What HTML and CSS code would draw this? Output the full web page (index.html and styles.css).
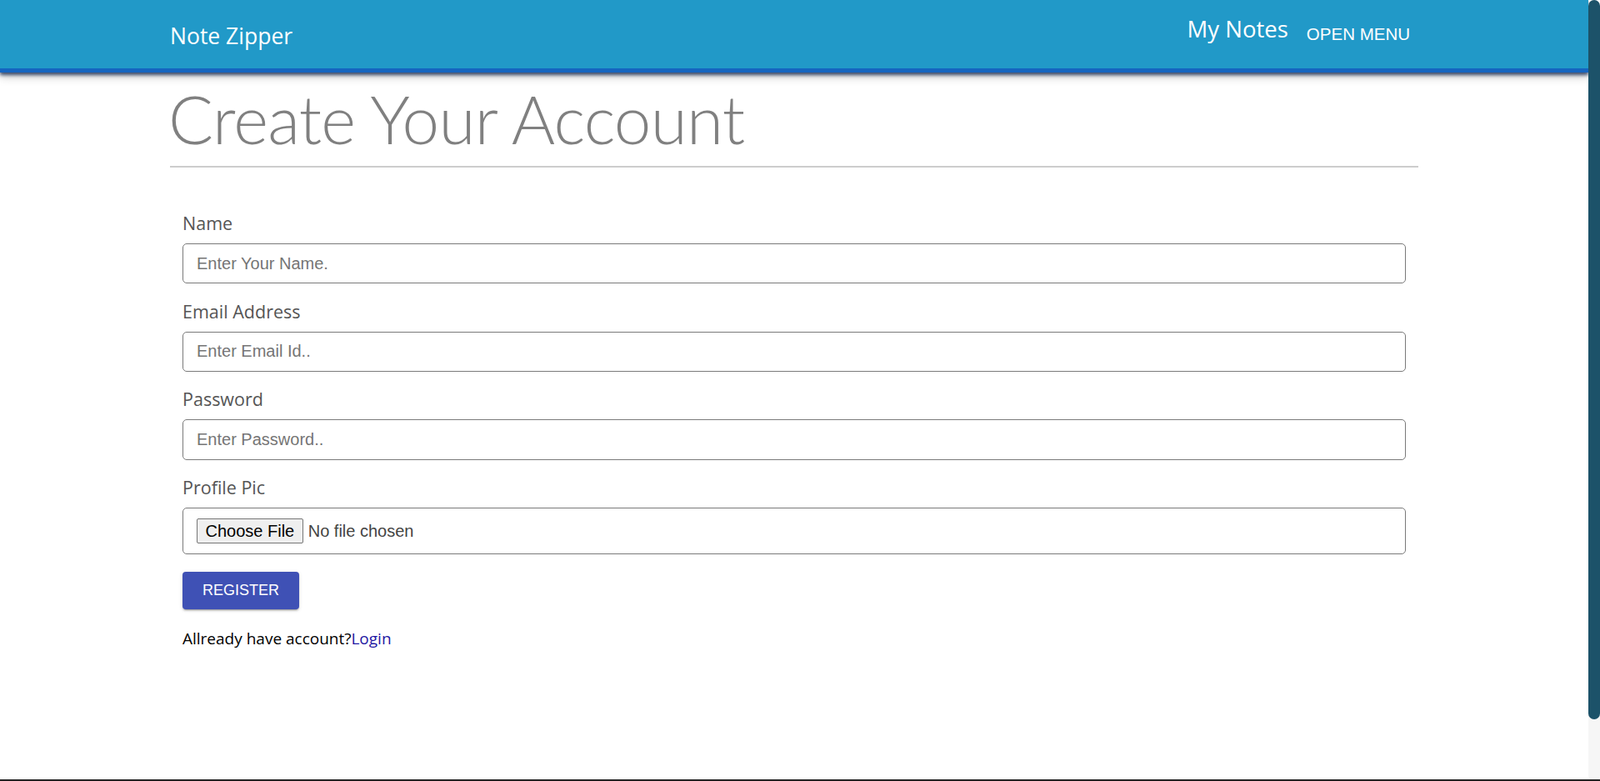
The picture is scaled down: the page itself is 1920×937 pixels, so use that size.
FILE: index.html
```html
<!DOCTYPE html>
<html lang="en">
<head>
<meta charset="utf-8">
<title>Note Zipper</title>
<link rel="stylesheet" href="styles.css">
</head>
<body>
<header class="navbar">
  <div class="container nav-inner">
    <a class="brand" href="#">Note Zipper</a>
    <nav class="nav-right">
      <a class="nav-link" href="#">My Notes</a>
      <button class="menu-btn" type="button">OPEN MENU</button>
    </nav>
  </div>
</header>
<main class="page">
  <div class="container">
    <h1 class="page-title">Create Your Account</h1>
    <form class="register-form">
      <div class="form-group">
        <label class="form-label" for="name">Name</label>
        <input class="form-control" id="name" type="text" placeholder="Enter Your Name.">
      </div>
      <div class="form-group">
        <label class="form-label" for="email">Email Address</label>
        <input class="form-control" id="email" type="email" placeholder="Enter Email Id..">
      </div>
      <div class="form-group">
        <label class="form-label" for="password">Password</label>
        <input class="form-control" id="password" type="password" placeholder="Enter Password..">
      </div>
      <div class="form-group">
        <label class="form-label" for="pic">Profile Pic</label>
        <div class="file-box">
          <input class="file-input" id="pic" type="file">
        </div>
      </div>
      <button class="register-btn" type="submit">REGISTER</button>
      <p class="login-line">Allready have account?<a class="login-link" href="#">Login</a></p>
    </form>
  </div>
</main>
<div class="fake-scrollbar" aria-hidden="true"><div class="fake-thumb"></div></div>
<div class="bottom-edge"></div>
</body>
</html>
```
FILE: styles.css
```css
*{box-sizing:border-box;}
html{overflow:hidden;}
body{
  margin:0;
  padding-right:14px;
  font-family:"Open Sans","Noto Sans",sans-serif;
  color:#212529;
  background:#fff;
}
a{text-decoration:none;}

.container{
  max-width:1498px;
  margin:0 auto;
}

/* Navbar */
.navbar{
  height:87px;
  background:#2199c8;
  border-bottom:5px solid #1565c0;
  box-shadow:0 3px 4px rgba(10,30,70,.75),0 6px 10px rgba(0,0,0,.18);
  position:relative;
  z-index:1;
}
.nav-inner{
  height:82px;
  display:flex;
  align-items:center;
  justify-content:space-between;
}
.brand{
  color:#fff;
  font-size:26.5px;
  padding-top:3px;
}
.nav-right{
  display:flex;
  align-items:center;
}
.nav-link{
  color:#fff;
  font-size:27.5px;
  margin-bottom:13px;
  margin-right:12px;
}
.menu-btn{
  font-family:"Liberation Sans",Arial,sans-serif;
  font-size:20.5px;
  color:#fff;
  background:transparent;
  border:0;
  padding:6px 10px;
  cursor:pointer;
}

/* Page */
.page-title{
  margin:7px 0 0;
  padding-bottom:9px;
  border-bottom:2px solid #cdcdcd;
  font-family:"Lato","Open Sans",sans-serif;
  font-weight:300;
  font-size:80px;
  line-height:96px;
  letter-spacing:-0.75px;
  text-indent:-2px;
  color:#808080;
}

.register-form{
  padding:51px 15px 0;
}
.form-group{
  margin-bottom:17.3px;
}
.form-label{
  display:block;
  font-size:21.5px;
  line-height:32px;
  margin-bottom:8px;
  color:#555;
}
.form-control{
  display:block;
  width:100%;
  height:48.4px;
  padding:8px 16px;
  font-family:"Liberation Sans",Arial,sans-serif;
  font-size:20px;
  line-height:30px;
  color:#495057;
  background:#fff;
  border:1px solid #7a7a7a;
  border-radius:5px;
  outline:none;
}
.form-control::placeholder{
  color:#757575;
  opacity:1;
}

.file-box{
  border:1px solid #7a7a7a;
  border-radius:5px;
  padding:0 16px;
  height:56px;
  display:flex;
  align-items:center;
}
.file-input{
  font-family:"Liberation Sans",Arial,sans-serif;
  font-size:20px;
  color:#444;
}
.file-input::file-selector-button{
  font-family:"Liberation Sans",Arial,sans-serif;
  font-size:20px;
  color:#000;
  background:#efefef;
  border:1px solid #767676;
  border-radius:2px;
  padding:3px 9.5px;
  margin-right:6px;
  height:30.7px;
}

.register-btn{
  display:block;
  margin-top:20.7px;
  width:140px;
  height:45.7px;
  padding:0;
  font-family:"Liberation Sans",Arial,sans-serif;
  font-size:18px;
  color:#fff;
  background:#3f51b5;
  border:0;
  border-radius:4px;
  box-shadow:0 3px 1px -2px rgba(0,0,0,.2),0 2px 2px 0 rgba(0,0,0,.14),0 1px 5px 0 rgba(0,0,0,.12);
  cursor:pointer;
}
.login-line{
  margin:20.4px 0 0;
  font-size:19px;
  line-height:28.5px;
  color:#000;
}
.login-link{
  color:#1f17a3;
}

/* scrollbar drawn over the right edge (screenshot shows a custom scrollbar) */
.fake-scrollbar{
  position:fixed;
  top:0;
  right:0;
  bottom:0;
  width:14px;
  background:#f6f6f6;
  border-radius:7px;
  z-index:2;
}
.fake-thumb{
  height:863px;
  background:#1c5269;
  border-radius:7px;
}

.bottom-edge{
  position:fixed;
  left:0;
  right:0;
  bottom:0;
  height:2px;
  background:#222;
  z-index:3;
}
```
